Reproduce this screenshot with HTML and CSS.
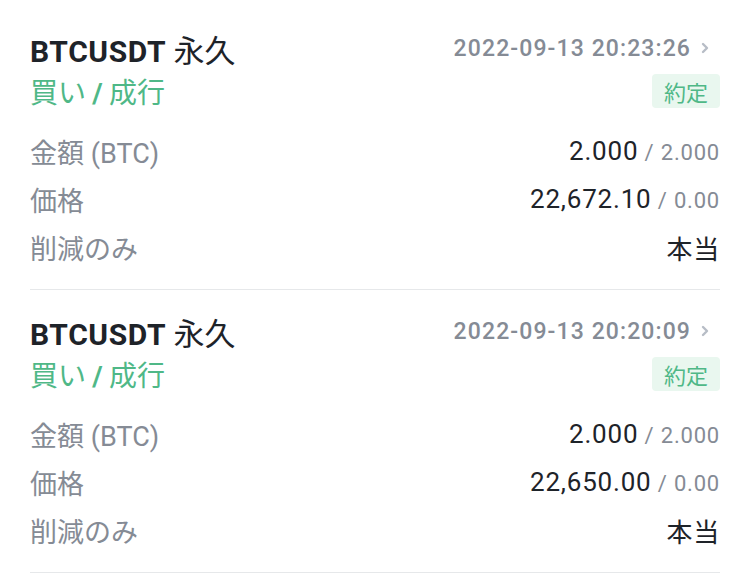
FILE: index.html
```html
<!DOCTYPE html>
<html lang="ja">
<head>
<meta charset="utf-8">
<link rel="stylesheet" href="styles.css">
</head>
<body>
<div class="list">
  <div class="card">
    <div class="head">
      <div class="title">BTCUSDT <span class="cjk">永久</span></div>
      <div class="date">2022-09-13 20:23:26
        <svg class="chev" width="10" height="14" viewBox="0 0 10 14"><path d="M3 3 L7 7 L3 11" fill="none" stroke="#b7bdc6" stroke-width="2.4" stroke-linecap="round" stroke-linejoin="round"/></svg>
      </div>
    </div>
    <div class="sub">
      <div class="side">買い <b class="slash">/</b> 成行</div>
      <div class="badge">約定</div>
    </div>
    <div class="row"><span class="label">金額 (BTC)</span><span class="val">2.000<span class="of"> / 2.000</span></span></div>
    <div class="row"><span class="label">価格</span><span class="val">22,672.10<span class="of"> / 0.00</span></span></div>
    <div class="row"><span class="label">削減のみ</span><span class="val">本当</span></div>
  </div>
  <div class="card">
    <div class="head">
      <div class="title">BTCUSDT <span class="cjk">永久</span></div>
      <div class="date">2022-09-13 20:20:09
        <svg class="chev" width="10" height="14" viewBox="0 0 10 14"><path d="M3 3 L7 7 L3 11" fill="none" stroke="#b7bdc6" stroke-width="2.4" stroke-linecap="round" stroke-linejoin="round"/></svg>
      </div>
    </div>
    <div class="sub">
      <div class="side">買い <b class="slash">/</b> 成行</div>
      <div class="badge">約定</div>
    </div>
    <div class="row"><span class="label">金額 (BTC)</span><span class="val">2.000<span class="of"> / 2.000</span></span></div>
    <div class="row"><span class="label">価格</span><span class="val">22,650.00<span class="of"> / 0.00</span></span></div>
    <div class="row"><span class="label">削減のみ</span><span class="val">本当</span></div>
  </div>
</div>
</body>
</html>
```
FILE: styles.css
```css
* { box-sizing: border-box; }
html, body { margin: 0; padding: 0; background: #fff; }
body {
  font-family: Roboto, "Noto Sans CJK JP", sans-serif;
  color: #1e2329;
}
.list { padding-top: 7px; }
.card {
  margin: 0 30px;
  padding: 21px 0 18px;
  border-bottom: 1px solid #e6e8ea;
}
.head {
  display: flex;
  justify-content: space-between;
  align-items: center;
  height: 40px;
}
.title {
  font-size: 30px;
  font-weight: 700;
  letter-spacing: 0.6px;
}
.title .cjk { font-weight: 400; font-family: "Noto Sans CJK JP", sans-serif; letter-spacing: 0; font-size: 31px; }
.date {
  display: flex;
  align-items: center;
  gap: 9px;
  font-size: 23px;
  font-weight: 500;
  color: #858b95;
  letter-spacing: 1.1px;
}
.chev { margin-right: 10px; }
.sub {
  display: flex;
  justify-content: space-between;
  align-items: center;
  height: 40px;
  margin-top: 3px;
  margin-bottom: 16px;
}
.side {
  font-family: "Noto Sans CJK JP", sans-serif;
  font-size: 28px;
  color: #4fb887;
}
.slash { font-family: Roboto, sans-serif; font-weight: 700; }
.badge {
  font-family: "Noto Sans CJK JP", sans-serif;
  font-size: 22px;
  color: #4fb887;
  background: #e9f7ef;
  padding: 0 12px;
  height: 34px;
  line-height: 34px;
  border-radius: 4px;
}
.row {
  display: flex;
  justify-content: space-between;
  align-items: center;
  height: 48px;
}
.label {
  font-family: Roboto, "Noto Sans CJK JP", sans-serif;
  font-size: 27px;
  color: #858b95;
}
.val {
  font-size: 26px;
  color: #1e2329;
  letter-spacing: 0.8px;
}
.of {
  font-size: 22px;
  color: #858b95;
}
```
